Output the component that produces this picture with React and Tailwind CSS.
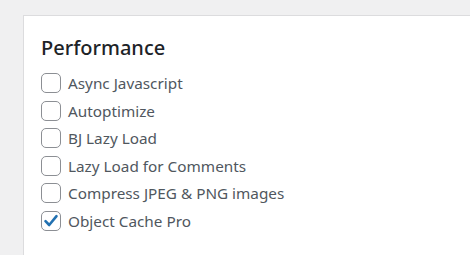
const items = [
  { label: 'Async Javascript', checked: false },
  { label: 'Autoptimize', checked: false },
  { label: 'BJ Lazy Load', checked: false },
  { label: 'Lazy Load for Comments', checked: false },
  { label: 'Compress JPEG & PNG images', checked: false },
  { label: 'Object Cache Pro', checked: true },
];

const Box = ({ checked }) => (
  <span className="w-[20px] h-[20px] shrink-0 rounded-[5px] border border-[#8c8f94] bg-white flex items-center justify-center">
    {checked && (
      <svg width="16" height="16" viewBox="0 0 16 16">
        <path d="M2.5 8.2 L6.2 12 L13.5 3.2" fill="none" stroke="#2271b1" strokeWidth="2.6" strokeLinecap="round" strokeLinejoin="round" />
      </svg>
    )}
  </span>
);

export default function App() {
  return (
    <div className="w-[470px] h-[255px] overflow-hidden bg-[#f0f0f1] pt-[15px] pl-[23px]" style={{ fontFamily: '"Noto Sans", "Open Sans", sans-serif' }}>
      <div className="w-[500px] h-[300px] bg-white border border-[#dcdcde] pl-[17px] pt-[18px]">
        <h2 className="text-[20px] font-medium text-[#1d2327] leading-[28px] mb-[11px]">Performance</h2>
        <div className="flex flex-col gap-[7.6px]">
          {items.map((it) => (
            <label key={it.label} className="flex items-center gap-[7px] h-[20px]">
              <Box checked={it.checked} />
              <span className="text-[15.3px] text-[#50575e] leading-[20px]">{it.label}</span>
            </label>
          ))}
        </div>
      </div>
    </div>
  );
}
